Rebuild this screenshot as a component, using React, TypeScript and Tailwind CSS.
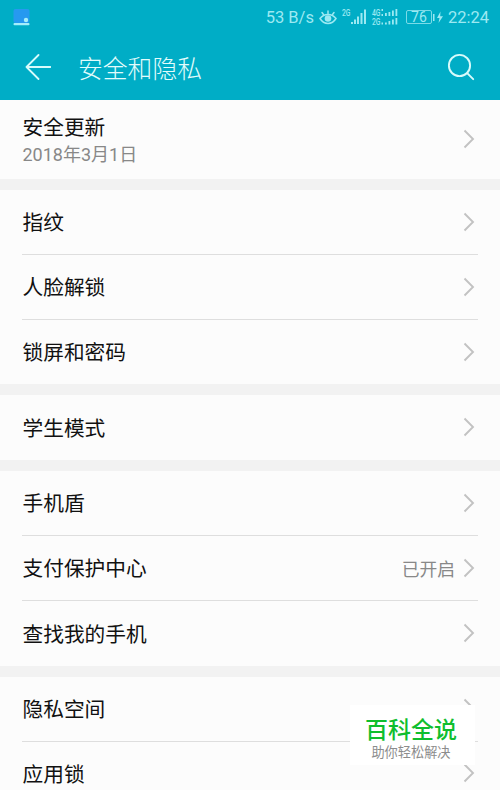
type Item = {
  title: string;
  subtitle?: string;
  value?: string;
};

const groups: Item[][] = [
  [{ title: "安全更新", subtitle: "2018年3月1日" }],
  [{ title: "指纹" }, { title: "人脸解锁" }, { title: "锁屏和密码" }],
  [{ title: "学生模式" }],
  [
    { title: "手机盾" },
    { title: "支付保护中心", value: "已开启" },
    { title: "查找我的手机" },
  ],
  [{ title: "隐私空间" }, { title: "应用锁" }],
];

export default function App() {
  return (
    <div className="relative h-[790px] w-[500px] overflow-hidden bg-[#f2f2f2] font-['Roboto','Noto_Sans_CJK_SC',sans-serif]">
      <header className="flex h-[100px] flex-col bg-[#00adc6]">
        <StatusBar />
        <div className="flex h-[66px] items-center pr-[25px] pl-[25px]">
          <BackIcon />
          <h1 className="ml-[27px] flex-1 pt-[5px] text-[24.8px] leading-[30px] font-light text-[#e2fcfc]">
            安全和隐私
          </h1>
          <SearchIcon />
        </div>
      </header>

      <main className="flex flex-col gap-[11px]">
        {groups.map((items) => (
          <section
            key={items[0].title}
            className="bg-[#fcfcfc] px-[22px] last:h-[130px]"
          >
            {items.map((item) => (
              <Row key={item.title} item={item} />
            ))}
          </section>
        ))}
      </main>

      {/* Floating badge */}
      <div className="absolute top-[705px] left-[350px] flex h-[60px] w-[125px] flex-col items-center bg-white pt-[11px] pr-[3px]">
        <span className="text-[23px] leading-[30px] font-medium text-[#0fbe2e]">
          百科全说
        </span>
        <span className="text-[13.2px] leading-[14px] text-[#8c8c8c]">
          助你轻松解决
        </span>
      </div>
    </div>
  );
}

function Row({ item }: { item: Item }) {
  return (
    <div
      className={`flex items-center border-b border-[#dedede] last:border-b-0 ${
        item.subtitle ? "h-[79px]" : "h-[65px] last:h-[64.4px] only:h-[65px]"
      }`}
    >
      <div className={`flex-1 pl-[0.5px] ${item.subtitle ? "pt-[2px]" : "pt-[3px]"}`}>
        <div className="text-[20.7px] leading-[27px] text-[#111111]">
          {item.title}
        </div>
        {item.subtitle && (
          <div className="text-[18px] leading-[25px] text-[#888888]">
            {item.subtitle}
          </div>
        )}
      </div>
      {item.value && (
        <span className="mr-[8px] pt-[3px] text-[17.8px] text-[#888888]">
          {item.value}
        </span>
      )}
      <svg
        className="mr-[3px] mb-px h-[20px] w-[12px] shrink-0"
        viewBox="0 0 12 20"
        fill="none"
        stroke="#c2c2c2"
        strokeWidth="1.9"
      >
        <path d="M1.5 1.5 10 10l-8.5 8.5" />
      </svg>
    </div>
  );
}

function StatusBar() {
  return (
    <div className="flex h-[34px] items-center pr-[11px] pl-[13px] text-[#9ce9f2]">
      <svg className="h-[17px] w-[17px]" viewBox="0 0 17 17">
        <rect x="0.5" y="0" width="16" height="14" rx="2" fill="#2699f0" />
        <rect x="0.5" y="14" width="16" height="2.2" rx="1" fill="#a5eefa" />
        <circle cx="13" cy="11" r="2.2" fill="#a5eefa" />
      </svg>
      <span className="ml-auto pt-[2px] text-[16.5px]">53 B/s</span>
      <EyeIcon />
      <SignalIcons />
      <div className="ml-[8px] flex h-[14px] w-[26px] items-center justify-center rounded-[2px] border border-[#7bdbe8] text-[14px] leading-none">
        76
      </div>
      <svg
        className="ml-px h-[14px] w-[11px]"
        viewBox="0 0 11 14"
        fill="currentColor"
      >
        <rect x="0" y="4" width="1.5" height="7" />
        <path d="M7.5 1.5 4 8h2.5L5.5 13 10 6.2H7.2z" />
      </svg>
      <span className="ml-[4px] pt-[2px] text-[16.5px]">22:24</span>
    </div>
  );
}

function EyeIcon() {
  return (
    <svg
      className="ml-[5px] h-[17px] w-[18px]"
      viewBox="0 0 18 17"
      fill="none"
      stroke="currentColor"
      strokeWidth="1.5"
      strokeLinecap="round"
    >
      <path d="M1 9.5C5 4 13 4 17 9.5 13 16 5 16 1 9.5z" />
      <circle cx="9" cy="9.5" r="3.3" fill="currentColor" stroke="none" />
      <path d="M9 4.5V2M4.5 5.5 3 3.5M13.5 5.5 15 3.5" />
    </svg>
  );
}

function SignalIcons() {
  return (
    <svg
      className="ml-[4px] h-[20px] w-[57px] font-['Roboto',sans-serif] text-[9px] font-medium"
      viewBox="0 0 57 20"
      fill="currentColor"
    >
      <text x="1" y="8.5" textLength="8.5" lengthAdjust="spacingAndGlyphs">
        2G
      </text>
      <path d="M10 15h2v2h-2zM13 12.5h2V17h-2zM16 9.5h2V17h-2zM19.5 6h2v11h-2zM23 2.5h2V17h-2z" />
      <text x="31" y="9" textLength="8.5" lengthAdjust="spacingAndGlyphs">
        4G
      </text>
      <text x="31" y="17.5" textLength="8.5" lengthAdjust="spacingAndGlyphs">
        2G
      </text>
      <path d="M40.5 2H42v2h-1.5zM40.5 7H42v2h-1.5zM44 6h1.8v3H44zM47.5 5h1.8v4h-1.8zM51 3.5h1.8V9H51zM54.5 2h1.8v7h-1.8z" />
      <path d="M40.5 15.5H42v2h-1.5zM44 15.5h1.8v2H44zM47.5 14h1.8v3.5h-1.8zM51 12.5h1.8v5H51zM54.5 11h1.8v6.5h-1.8z" />
    </svg>
  );
}

function BackIcon() {
  return (
    <svg
      className="h-[26px] w-[26px]"
      viewBox="0 0 26 26"
      fill="none"
      stroke="#d8fbfb"
      strokeWidth="1.8"
      strokeLinecap="round"
      strokeLinejoin="round"
    >
      <path d="M13.5 1 1.5 13l12 12M1.5 13h24" />
    </svg>
  );
}

function SearchIcon() {
  return (
    <svg
      className="h-[28px] w-[28px]"
      viewBox="0 0 28 28"
      fill="none"
      stroke="#d8fbfb"
      strokeWidth="1.9"
      strokeLinecap="round"
    >
      <circle cx="12.5" cy="12.5" r="10.6" />
      <path d="m20.2 20.2 6 6" />
    </svg>
  );
}
